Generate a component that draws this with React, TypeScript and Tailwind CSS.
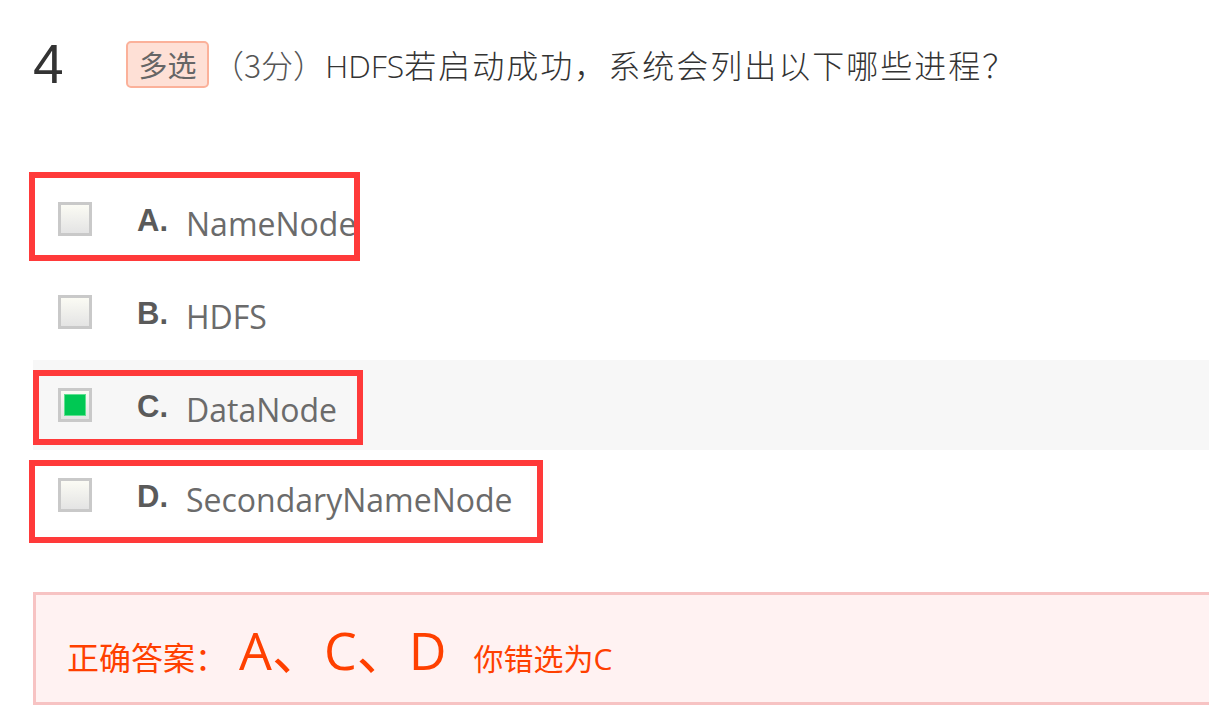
import React from "react";

const sans = '"Open Sans", "Noto Sans CJK SC", sans-serif';
const cjk = '"Noto Sans CJK SC", "Open Sans", sans-serif';

function Checkbox({ checked }: { checked?: boolean }) {
  return (
    <div className="w-[34px] h-[34px] shrink-0 border-[3px] border-[#c9c9c9] bg-gradient-to-b from-[#fbfbf4] to-[#e4e4e4] p-[3px]">
      {checked && <div className="w-full h-full bg-[#00c853] border border-[#5fe08f]" />}
    </div>
  );
}

function Option({
  letter,
  text,
  checked,
  shaded,
  className,
}: {
  letter: string;
  text: string;
  checked?: boolean;
  shaded?: boolean;
  className?: string;
}) {
  return (
    <div className={`h-[90px] flex items-center ${shaded ? "bg-[#f7f7f7]" : ""} ${className ?? ""}`}>
      <div className="ml-[25px]">
        <Checkbox checked={checked} />
      </div>
      <div
        className="ml-[45px] w-[49px] text-[31px] font-bold text-[#5a5a5a] leading-none mt-[2px]"
        style={{ fontFamily: '"Liberation Sans", Arial, sans-serif' }}
      >
        {letter}
      </div>
      <div className="text-[32px] text-[#6b6b6b] leading-none mt-[10px]" style={{ fontFamily: sans }}>
        {text}
      </div>
    </div>
  );
}

export default function App() {
  return (
    <div className="relative w-[1209px] h-[725px] overflow-hidden bg-white">
      <div className="pl-[33px] pt-[41px]">
        {/* header */}
        <div className="flex items-center h-[47px]">
          <div
            className="w-[93px] text-[55px] text-[#333] leading-none"
            style={{ fontFamily: '"Liberation Sans", Arial, sans-serif' }}
          >
            4
          </div>
          <div
            className="w-[83px] h-[47px] flex items-center justify-center rounded-[5px] border-2 border-[#fbb19a] bg-[#fee0d6] text-[29px] text-[#666]"
            style={{ fontFamily: cjk }}
          >
            多选
          </div>
          <div className="ml-[3px] text-[32px] font-light leading-none flex items-baseline" style={{ fontFamily: sans }}>
            <span className="text-[#555]" style={{ fontFamily: cjk }}>（3分）</span>
            <span className="text-[#333]">
              HDFS<span className="tracking-[2px]" style={{ fontFamily: cjk }}>若启动成功，系统会列出以下哪些进程？</span>
            </span>
          </div>
        </div>

        {/* options */}
        <div className="mt-[86px]">
          <Option letter="A." text="NameNode" />
          <Option letter="B." text="HDFS" className="mt-[3px]" />
          <Option letter="C." text="DataNode" checked shaded className="mt-[3px]" />
          <Option letter="D." text="SecondaryNameNode" />
        </div>

        {/* answer */}
        <div className="mt-[52px] w-[1220px] h-[113px] border-[3px] border-[#f7c3c3] bg-[#fff2f2] flex items-center pl-[31px]">
          <div className="flex items-baseline text-[#ff4000] leading-none" style={{ fontFamily: cjk }}>
            <span className="text-[32px]">正确答案：</span>
            <span className="text-[52px] ml-[12px]" style={{ fontFamily: sans }}>
              A<span style={{ fontFamily: cjk }}>、</span>C<span style={{ fontFamily: cjk }}>、</span>D
            </span>
            <span className="text-[30px] ml-[27px]">
              你错选为<span style={{ fontFamily: sans }}>C</span>
            </span>
          </div>
        </div>
      </div>

      {/* red annotation boxes */}
      <div className="absolute left-[29px] top-[172px] w-[331px] h-[89px] border-[6px] border-[#ff3a3a]" />
      <div className="absolute left-[33px] top-[370px] w-[330px] h-[75px] border-[6px] border-[#ff3a3a]" />
      <div className="absolute left-[29px] top-[460px] w-[514px] h-[83px] border-[6px] border-[#ff3a3a]" />
    </div>
  );
}
